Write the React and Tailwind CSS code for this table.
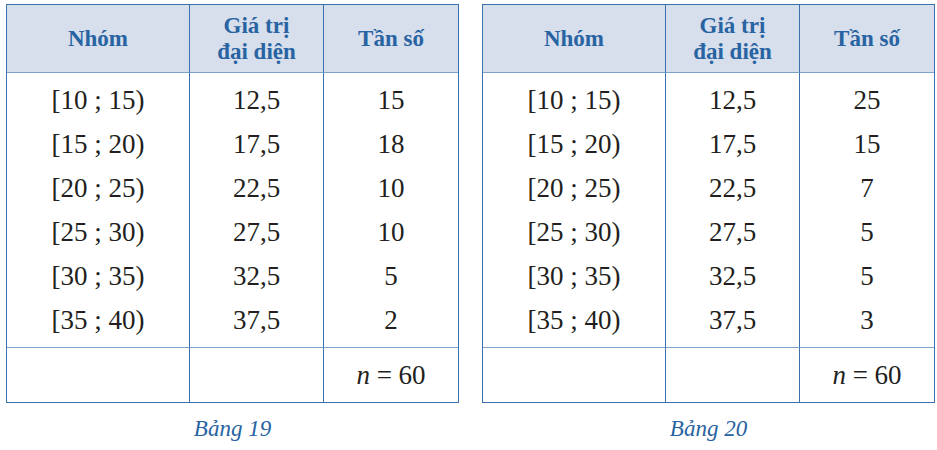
import React from "react";

const fams = ['"Liberation Serif"', '"Times New Roman"', "serif"];
const F = { fontFamily: fams.join(", ") };

function Cell({ children, className }) {
  return (
    <div className={className} style={F}>
      {children}
    </div>
  );
}

function Table({ freqs, caption }) {
  const groups = ["[10 ; 15)", "[15 ; 20)", "[20 ; 25)", "[25 ; 30)", "[30 ; 35)", "[35 ; 40)"];
  const mids = ["12,5", "17,5", "22,5", "27,5", "32,5", "37,5"];
  const col = (items) => (
    <div className="flex flex-col pt-[5px] pb-[5px]">
      {items.map((t, i) => (
        <Cell key={i} className="h-[44px] flex items-center justify-center">{t}</Cell>
      ))}
    </div>
  );
  return (
    <div className="flex flex-col w-[453px]">
      <div className="border border-[#3d71ae] grid grid-cols-[183px_134px_1fr] text-[27px] text-[#231f20] leading-none">
        <Cell className="h-[68px] bg-[#d7deec] border-r border-b border-r-[#3d71ae] border-b-[#7ca2cc] flex items-center justify-center font-bold text-[23px] text-[#2863a2]">Nhóm</Cell>
        <Cell className="h-[68px] bg-[#d7deec] border-r border-b border-r-[#3d71ae] border-b-[#7ca2cc] flex flex-col items-center justify-center font-bold text-[23px] leading-[26px] text-[#2863a2]">
          <span style={F}>Giá trị</span>
          <span style={F}>đại diện</span>
        </Cell>
        <Cell className="h-[68px] bg-[#d7deec] border-b border-b-[#7ca2cc] flex items-center justify-center font-bold text-[23px] text-[#2863a2]">Tần số</Cell>
        <div className="border-r border-b border-r-[#3d71ae] border-b-[#7ca2cc]">{col(groups)}</div>
        <div className="border-r border-b border-r-[#3d71ae] border-b-[#7ca2cc]">{col(mids)}</div>
        <div className="border-b border-b-[#7ca2cc]">{col(freqs)}</div>
        <div className="h-[54px] border-r border-r-[#3d71ae]"></div>
        <div className="h-[54px] border-r border-r-[#3d71ae]"></div>
        <Cell className="h-[54px] flex items-center justify-center">
          <i style={F}>n</i>
          <span style={F} className="whitespace-pre"> = 60</span>
        </Cell>
      </div>
      <Cell className="h-[58px] flex items-center justify-center italic text-[23px] text-[#2863a2] pt-[5px]">{caption}</Cell>
    </div>
  );
}

export default function App() {
  return (
    <div className="w-[937px] h-[450px] bg-white pl-[6px] pt-[4px] flex gap-[23px]">
      <Table freqs={["15", "18", "10", "10", "5", "2"]} caption="Bảng 19" />
      <Table freqs={["25", "15", "7", "5", "5", "3"]} caption="Bảng 20" />
    </div>
  );
}
